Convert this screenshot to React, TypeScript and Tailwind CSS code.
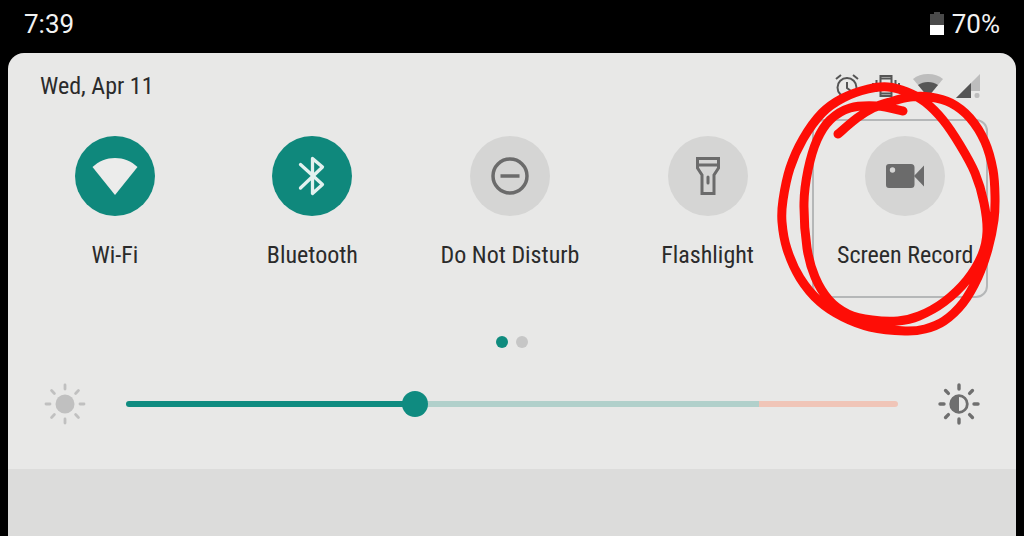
import React, { useState } from 'react';

type Point = [number, number];

// One continuous hand-drawn stroke, from its inner tip round twice to the end
const MARKER_POINTS: Point[] = [
  [903, 111], [877, 106], [850, 108], [830, 120], [817, 140], [808, 170], [804, 203],
  [807, 248], [815, 277], [829, 300], [848, 314], [872, 320], [898, 321], [919, 316],
  [944, 302], [967, 280], [982, 255], [987, 232], [984, 203], [975, 173], [960, 145],
  [943, 120], [925, 102], [907, 92], [888, 87], [868, 89], [843, 98], [822, 113],
  [803, 139], [790, 168], [783, 200], [782, 222], [787, 249], [800, 278], [820, 302],
  [843, 317], [870, 327], [905, 331], [925, 329], [944, 321], [963, 303], [978, 277],
  [988, 249], [994, 220], [995, 196], [993, 170], [985, 142], [970, 118], [951, 103],
  [930, 97], [910, 97], [890, 102], [873, 108], [857, 118], [838, 134],
];

const smoothPath = (points: Point[]) => {
  let d = `M${points[0][0]} ${points[0][1]}`;
  for (let i = 0; i < points.length - 1; i++) {
    const p0 = points[i - 1] ?? points[i];
    const p1 = points[i];
    const p2 = points[i + 1];
    const p3 = points[i + 2] ?? p2;
    d += `C${p1[0] + (p2[0] - p0[0]) / 6} ${p1[1] + (p2[1] - p0[1]) / 6} `;
    d += `${p2[0] - (p3[0] - p1[0]) / 6} ${p2[1] - (p3[1] - p1[1]) / 6} ${p2[0]} ${p2[1]}`;
  }
  return d;
};

const WifiIcon = () => (
  <svg className="size-12" viewBox="0 0 48 48" fill="#ececeb" aria-hidden="true">
    <path d="M24 43 1.500 15C8 9 15.500 6 24 6s16 3 22.500 9Z" />
  </svg>
);

const BluetoothIcon = () => (
  <svg className="size-12" viewBox="0 0 48 48" fill="none" stroke="#e2f1ef" strokeWidth="3.300" aria-hidden="true">
    <path d="M12.500 12.500 34.500 32.500 24.500 41.500V6.500L34.500 15 12.500 36" strokeLinejoin="round" strokeLinecap="round" />
  </svg>
);

const DoNotDisturbIcon = () => (
  <svg className="size-12" viewBox="0 0 48 48" fill="none" stroke="#6b6b6b" strokeWidth="3.500" aria-hidden="true">
    <circle cx="24" cy="24" r="17" />
    <path d="M14.500 24h19" />
  </svg>
);

const FlashlightIcon = () => (
  <svg className="size-12" viewBox="0 0 48 48" fill="none" stroke="#6b6b6b" strokeWidth="3" aria-hidden="true">
    <path d="M13.500 6.500h21V16L30 23v18.500H18V23l-4.500-7Z" />
    <path d="M13.500 13h21" />
    <path d="M24 25v6" strokeLinecap="round" />
  </svg>
);

const RecordIcon = () => (
  <svg className="size-12" viewBox="0 0 48 48" fill="#6b6b6b" aria-hidden="true">
    <path
      fillRule="evenodd"
      d="M8 12h22a3.500 3.500 0 0 1 3.500 3.500v17A3.500 3.500 0 0 1 30 36H8a3 3 0 0 1-3-3V15a3 3 0 0 1 3-3Zm3.500 3.300a2.700 2.700 0 1 0 0 5.400 2.700 2.700 0 0 0 0-5.400Z"
    />
    <path d="M33 24 43 13.500v21Z" />
  </svg>
);

const SunRays = () => (
  <>
    {[0, 45, 90, 135, 180, 225, 270, 315].map((angle) => (
      <path key={angle} d="M21 2v4" transform={`rotate(${angle} 21 21)`} />
    ))}
  </>
);

const BrightnessLowIcon = () => (
  <svg className="size-[42px] shrink-0" viewBox="0 0 42 42" aria-hidden="true">
    <circle cx="21" cy="21" r="9.500" fill="#c0c0c0" />
    <g stroke="#c0c0c0" strokeWidth="2.800" strokeLinecap="round">
      <SunRays />
    </g>
  </svg>
);

const BrightnessAutoIcon = () => (
  <svg className="size-[42px] shrink-0" viewBox="0 0 42 42" aria-hidden="true">
    <circle cx="21" cy="21" r="8.300" fill="none" stroke="#6f6f6f" strokeWidth="2.800" />
    <path d="M21 12a9 9 0 0 0 0 18Z" fill="#6f6f6f" />
    <g stroke="#6f6f6f" strokeWidth="3.400" strokeLinecap="round">
      <SunRays />
    </g>
  </svg>
);

const BatteryIcon = () => (
  <svg className="h-6 w-[14px]" viewBox="0 0 14 24" aria-hidden="true">
    <path d="M4 0h6v2h4v12H0V2h4Z" fill="#4a4a4a" />
    <path d="M0 13h14v10H0Z" fill="#fff" />
  </svg>
);

const StatusIcons = () => (
  <div className="flex items-center gap-[13px]">
    <svg className="size-6" viewBox="0 0 24 24" fill="none" stroke="#555" strokeWidth="2" aria-hidden="true">
      <circle cx="12" cy="13.500" r="9.500" />
      <path d="M12 8v6l4 3M1 5l5-4M23 5l-5-4" />
    </svg>
    <svg className="h-6 w-7" viewBox="0 0 28 24" fill="none" stroke="#555" strokeWidth="2" aria-hidden="true">
      <path d="M8.500 2h11v20h-11ZM8.500 4.500h11M8.500 19.500h11" />
      <path d="M4.500 6v12M23.500 6v12M1 9v6M27 9v6" />
    </svg>
    <svg className="h-6 w-[30px]" viewBox="0 0 30 24" aria-hidden="true">
      <path d="M15 23 0 5C4 1.500 9 0 15 0s11 1.500 15 5Z" fill="#bdbdbd" />
      <path d="M15 23 5 11c3-2 6-3 10-3s7 1 10 3Z" fill="#555" />
    </svg>
    <svg className="size-6" viewBox="0 0 24 24" aria-hidden="true">
      <path d="M24 0v17h-9v7H0Z" fill="#bdbdbd" />
      <path d="M15 9v15H0Z" fill="#555" />
      <rect x="18.500" y="19" width="5" height="5" rx="2" fill="#bdbdbd" />
    </svg>
  </div>
);

interface TileProps {
  label: string;
  icon: React.ReactNode;
  active?: boolean;
  children?: React.ReactNode;
}

const Tile: React.FC<TileProps> = ({ label, icon, active = false, children }) => (
  <button type="button" aria-pressed={active} className="relative flex flex-col items-center pt-[17px] pb-[29px]">
    <span
      className={`flex size-20 items-center justify-center rounded-full ${active ? 'bg-[#0f887c]' : 'bg-[#d5d5d4]'}`}
    >
      {icon}
    </span>
    <span className="mt-[25px] text-2xl leading-7 whitespace-nowrap">{label}</span>
    {children}
  </button>
);

const MarkerRing = () => (
  <>
    <span className="absolute inset-y-0 right-4 left-[6px] rounded-xl border-2 border-[#b5b7b8]" />
    <svg
      className="pointer-events-none absolute -top-[49px] -left-[36px] h-[280px] w-[240px] max-w-none"
      viewBox="770 70 240 280"
      fill="none"
      stroke="#fe0d06"
      strokeWidth="9"
      strokeLinecap="round"
      strokeLinejoin="round"
      aria-hidden="true"
    >
      <path d={smoothPath(MARKER_POINTS)} />
    </svg>
  </>
);

export default function App() {
  const [brightness, setBrightness] = useState(37);

  return (
    <div className="flex min-h-screen flex-col bg-black px-2 font-['Roboto_Condensed',Roboto,sans-serif] text-[#2b2b2b]">
      <header className="flex h-[53px] items-center justify-between px-4 pb-[5px] font-[Roboto,sans-serif] text-[26px] text-[#f2f2f2]">
        <span>7:39</span>
        <span className="flex items-center gap-2">
          <BatteryIcon />
          70%
        </span>
      </header>

      <main className="flex flex-1 flex-col overflow-hidden rounded-t-2xl bg-[#e8e8e7]">
        <div className="flex h-[66px] items-center justify-between pr-9 pl-8">
          <span className="text-2xl">Wed, Apr 11</span>
          <StatusIcons />
        </div>

        <div className="grid grid-cols-5 pr-3 pl-2">
          <Tile label="Wi-Fi" icon={<WifiIcon />} active />
          <Tile label="Bluetooth" icon={<BluetoothIcon />} active />
          <Tile label="Do Not Disturb" icon={<DoNotDisturbIcon />} />
          <Tile label="Flashlight" icon={<FlashlightIcon />} />
          <Tile label="Screen Record" icon={<RecordIcon />}>
            <MarkerRing />
          </Tile>
        </div>

        <div className="mt-[38px] flex justify-center gap-2">
          <span className="size-3 rounded-full bg-[#0f8b7e]" />
          <span className="size-3 rounded-full bg-[#c6c6c6]" />
        </div>

        <div className="mt-[35px] flex items-center gap-10 px-9">
          <BrightnessLowIcon />
          <input
            type="range"
            aria-label="Brightness"
            value={brightness}
            onChange={(e) => setBrightness(Number(e.target.value))}
            className="h-[6px] min-w-0 flex-1 appearance-none rounded-full [&::-webkit-slider-thumb]:size-[26px] [&::-webkit-slider-thumb]:appearance-none [&::-webkit-slider-thumb]:rounded-full [&::-webkit-slider-thumb]:bg-[#0f8b80]"
            style={{
              background: `linear-gradient(to right, #0f8b80 ${brightness}%, #b1d0cb ${brightness}%, #b1d0cb 82%, #f0c5b8 82%)`,
            }}
          />
          <BrightnessAutoIcon />
        </div>

        <div className="mt-11 min-h-[67px] flex-1 bg-[#dcdcdb]" />
      </main>
    </div>
  );
}
